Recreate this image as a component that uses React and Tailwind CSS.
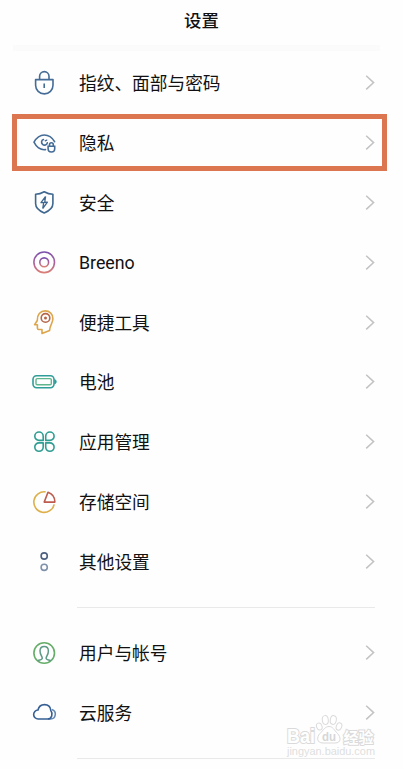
import React from 'react';

const LockIcon = () => (
  <svg width="28" height="28" viewBox="0 0 28 28" fill="none" stroke="#446c96" strokeWidth="1.6">
    <path d="M5.6 10.6H23V16.2a8.7 8.7 0 0 1-17.4 0Z" strokeLinejoin="round" />
    <path d="M9.6 10.4V7.3a4.7 4.7 0 0 1 9.4 0v3.1" />
    <path d="M14.2 14.5v4.5" />
  </svg>
);

const PrivacyIcon = () => (
  <svg width="28" height="28" viewBox="0 0 28 28" fill="none" stroke="#446c96" strokeWidth="1.6" strokeLinecap="round">
    <path d="M15.5 20.6C10.3 21.3 6 17.4 4 13.2 6.3 9 10 6 14.3 6c4.2 0 7.9 2.6 10.3 6.7" />
    <path d="M13.4 10.5a2.9 2.9 0 1 0 3.9 3.3" />
    <path d="M15.200 11.800l1.600-.7" strokeWidth="1.300" />
    <path d="M18.100 17.300h6.600v2.400a3.300 3.300 0 0 1-6.600 0Z" />
    <path d="M19.500 17v-1.300a1.900 1.900 0 0 1 3.800 0V17" />
  </svg>
);

const ShieldIcon = () => (
  <svg width="28" height="28" viewBox="0 0 28 28" fill="none" stroke="#3f678f" strokeWidth="1.6" strokeLinejoin="round">
    <path d="M14.200 2.800Q18.500 5.200 22.900 5.200V14.500C22.900 19 19 22 14.200 24 9.400 22 5.600 19 5.600 14.500V5.200Q10 5.200 14.200 2.800Z" />
    <path d="M15.600 7.500L11 13.700l6.400-.5-4.700 6.300M15.600 7.500l-.9 5.800M12.700 19.500l1-5.800" strokeWidth="1.300" />
  </svg>
);

const BreenoIcon = () => (
  <svg width="28" height="28" viewBox="0 0 28 28" fill="none">
    <defs>
      <linearGradient id="breeno" x1="0" y1="0" x2="0" y2="1">
        <stop offset="0" stopColor="#7a51ad" />
        <stop offset="0.55" stopColor="#ad629b" />
        <stop offset="1" stopColor="#d97f76" />
      </linearGradient>
    </defs>
    <circle cx="14.200" cy="13.300" r="10.300" stroke="url(#breeno)" strokeWidth="1.600" />
    <circle cx="14.200" cy="13.300" r="4.400" stroke="url(#breeno)" strokeWidth="1.600" />
  </svg>
);

const HeadIcon = () => (
  <svg width="28" height="28" viewBox="0 0 28 28" fill="none" strokeLinejoin="round">
    <path
      d="M12 24.500V20.500H8.600Q7.400 20.500 7.400 19V15.700H4.600L7.300 11.500C7 5.600 10.300 1.900 15.200 1.900 19.700 1.900 22.900 5.200 22.900 9.500 22.900 14.500 19.900 15.700 19.600 21.400Z"
      stroke="#dda64d"
      strokeWidth="1.600"
    />
    <circle cx="15.500" cy="8.900" r="4.300" stroke="#b76549" strokeWidth="1.600" />
    <circle cx="15.500" cy="8.900" r="1.500" fill="#b76549" />
  </svg>
);

const BatteryIcon = () => (
  <svg width="28" height="28" viewBox="0 0 28 28" fill="none">
    <rect x="3" y="7.700" width="21" height="12" rx="3.600" stroke="#2f9d98" strokeWidth="1.600" />
    <rect x="6" y="10.600" width="15.300" height="6.200" rx="1.200" stroke="#5fb58c" strokeWidth="1.400" />
    <path d="M24.600 11.400q1.800.4 1.800 2.300t-1.800 2.300Z" fill="#2f9d98" stroke="#2f9d98" strokeWidth=".6" />
  </svg>
);

const AppsIcon = () => (
  <svg width="28" height="28" viewBox="0 0 28 28" fill="none" stroke="#2f9d92" strokeWidth="1.600" strokeLinejoin="round">
    <path d="M13.200 12.400H9A4.200 4.200 0 1 1 13.200 8.200Z" />
    <path d="M15.700 12.400h4.200A4.200 4.200 0 1 0 15.700 8.200Z" />
    <path d="M13.200 14.900H9a4.200 4.200 0 1 0 4.200 4.200Z" />
    <path d="M15.700 14.900h4.200a4.200 4.200 0 1 1-4.200 4.200Z" />
  </svg>
);

const StorageIcon = () => (
  <svg width="28" height="28" viewBox="0 0 28 28" fill="none" strokeWidth="1.600" strokeLinejoin="round">
    <path d="M15.600 3.900A10.300 10.300 0 1 0 24.200 16.300" stroke="#deb04c" />
    <path d="M14.200 14.100L18 4.200A10.300 10.300 0 0 1 24.900 14.100Z" stroke="#bd5c4e" />
  </svg>
);

const OtherIcon = () => (
  <svg width="28" height="28" viewBox="0 0 28 28" fill="none" strokeWidth="1.600">
    <circle cx="14.200" cy="8" r="3.100" stroke="#4d607f" />
    <circle cx="14.200" cy="19.300" r="3.100" stroke="#8091aa" />
  </svg>
);

const UserIcon = () => (
  <svg width="28" height="28" viewBox="0 0 28 28" fill="none" strokeWidth="1.600">
    <circle cx="14.200" cy="14" r="10.300" stroke="#65ad69" />
    <path
      d="M7.500 21.600C9.500 21 12.300 20.700 12.300 19.200 12.300 17.400 10 15.600 10 11.900 10 9.200 11.700 7.500 14.200 7.500S18.400 9.200 18.400 11.900C18.400 15.600 16.100 17.400 16.100 19.200 16.100 20.700 18.900 21 20.900 21.600"
      stroke="#5d9a85"
      strokeWidth="1.500"
    />
  </svg>
);

const CloudIcon = () => (
  <svg width="28" height="28" viewBox="0 0 28 28" fill="none" strokeWidth="1.600" strokeLinejoin="round">
    <path d="M21.800 10.400A4.900 4.900 0 0 1 20.500 20H18" stroke="#6488b1" />
    <path d="M8.300 20A4.500 4.500 0 0 1 8 11C8.700 7.500 11.300 5.600 14.500 5.600 18.100 5.600 20.500 8 20.800 11.400 23.200 14.600 22 20 17.300 20Z" stroke="#365f94" />
  </svg>
);

const Chevron = () => (
  <svg width="10" height="16" viewBox="0 0 10 16" fill="none" stroke="#c3c3c5" strokeWidth="1.500">
    <path d="M1.200.8L8.600 7.600 1.200 14.400" />
  </svg>
);

const mainItems = [
  { label: '指纹、面部与密码', icon: LockIcon },
  { label: '隐私', icon: PrivacyIcon, highlighted: true },
  { label: '安全', icon: ShieldIcon },
  { label: 'Breeno', icon: BreenoIcon, latin: true },
  { label: '便捷工具', icon: HeadIcon },
  { label: '电池', icon: BatteryIcon },
  { label: '应用管理', icon: AppsIcon },
  { label: '存储空间', icon: StorageIcon },
  { label: '其他设置', icon: OtherIcon },
];

const accountItems = [
  { label: '用户与帐号', icon: UserIcon },
  { label: '云服务', icon: CloudIcon },
];

const SettingsRow = ({ item }) => {
  const Icon = item.icon;
  return (
    <li className="relative flex h-[59.9px] items-center pl-[30px] pr-[28px]">
      <Icon />
      <span
        className={`ml-[21px] flex-1 leading-6 text-[#111] ${item.latin ? "text-[17.8px] font-['Roboto','Noto_Sans_CJK_SC',sans-serif]" : 'pb-[2px] text-[17.7px]'}`}
      >
        {item.label}
      </span>
      <Chevron />
      {item.highlighted && (
        <div className="absolute left-[12px] right-[16px] top-[1px] h-[57px] border-[5px] border-[#dc7650]" />
      )}
    </li>
  );
};

const Watermark = () => (
  <div className="absolute left-[285px] top-[714px] h-[44px] w-[92px] font-['Liberation_Sans','Noto_Sans_CJK_SC',sans-serif]">
    <svg width="92" height="44" viewBox="0 0 92 44" fill="#fff" stroke="#dadada" strokeWidth="1">
      <ellipse cx="34.300" cy="12.500" rx="2.700" ry="3.600" transform="rotate(-20 34.300 12.500)" />
      <ellipse cx="40.300" cy="6" rx="3" ry="4.400" transform="rotate(-6 40.300 6)" />
      <ellipse cx="48.300" cy="6" rx="3" ry="4.400" transform="rotate(10 48.300 6)" />
      <ellipse cx="54" cy="12.500" rx="2.700" ry="3.800" transform="rotate(20 54 12.500)" />
      <path d="M44 12.500c4 0 5 3.500 8.500 7s4 9.500-2.500 9.500H38c-6.500 0-6.500-6-3-9.500s5-7 9-7Z" />
      <g strokeWidth="2" paintOrder="stroke" fontWeight="bold">
        <text x="2" y="28.500" fontSize="19.500" textLength="28" lengthAdjust="spacingAndGlyphs">Bai</text>
        <text x="37" y="27" fontSize="12.500" fill="#d6d6d6" stroke="none" textLength="14" lengthAdjust="spacingAndGlyphs">du</text>
        <text x="58.500" y="28.500" fontSize="15">经验</text>
      </g>
      <text x="2" y="40.500" fontSize="10.500" fill="#dfdfdf" stroke="none" textLength="88" lengthAdjust="spacingAndGlyphs">jingyan.baidu.com</text>
    </svg>
  </div>
);

const App = () => {
  return (
    <div className="relative h-[769px] w-[403px] overflow-hidden bg-[#fefefe] font-['Noto_Sans_CJK_SC',sans-serif]">
      <header className="flex h-[53px] flex-col">
        <h1 className="pt-[8px] text-center text-[17.4px] font-medium leading-6 text-[#111]">设置</h1>
        <div className="ml-[13px] mt-[13px] h-[6px] w-[367px] bg-[#fbfbfb]" />
      </header>

      <ul>
        {mainItems.map((item) => (
          <SettingsRow key={item.label} item={item} />
        ))}
      </ul>

      <div className="mb-[14.9px] ml-[77px] mr-[28px] mt-[14.9px] h-px bg-[#e9e9e9]" />

      <ul>
        {accountItems.map((item) => (
          <SettingsRow key={item.label} item={item} />
        ))}
      </ul>

      <div className="ml-[77px] mr-[28px] mt-[15px] h-px bg-[#e9e9e9]" />
      <Watermark />
    </div>
  );
};

export default App;
